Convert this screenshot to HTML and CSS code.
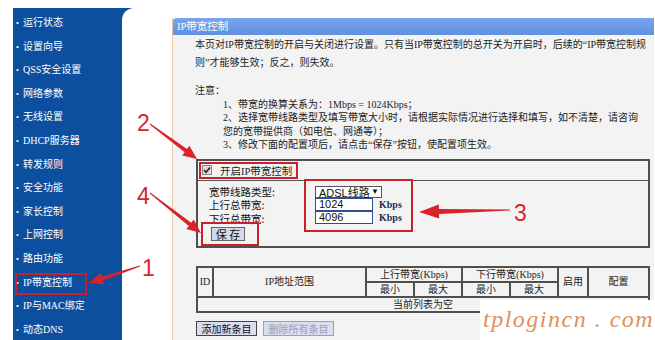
FILE: index.html
```html
<!DOCTYPE html>
<html lang="zh-CN">
<head>
    <meta charset="UTF-8">
    <meta name="viewport" content="width=device-width, initial-scale=1.0">
    <title>IP带宽控制</title>
    <link rel="stylesheet" href="styles.css">
</head>
<body>

<div class="page">
    <ul class="menu">
        <li>运行状态</li>
        <li>设置向导</li>
        <li>QSS安全设置</li>
        <li>网络参数</li>
        <li>无线设置</li>
        <li>DHCP服务器</li>
        <li>转发规则</li>
        <li>安全功能</li>
        <li>家长控制</li>
        <li>上网控制</li>
        <li>路由功能</li>
        <li class="marked">IP带宽控制</li>
        <li>IP与MAC绑定</li>
        <li>动态DNS</li>
    </ul>

    <div class="main">
        <div class="panel">
            <div class="panel-head">IP带宽控制</div>
            <div class="panel-body">
                <p class="intro">本页对IP带宽控制的开启与关闭进行设置。只有当IP带宽控制的总开关为开启时，后续的“IP带宽控制规<br>则”才能够生效；反之，则失效。</p>

                <div class="notes">
                    <p>注意：</p>
                    <p class="note">1、带宽的换算关系为：1Mbps = 1024Kbps；</p>
                    <p class="note">2、选择宽带线路类型及填写带宽大小时，请根据实际情况进行选择和填写，如不清楚，请咨询<br>您的宽带提供商（如电信、网通等）；</p>
                    <p class="note">3、修改下面的配置项后，请点击“保存”按钮，使配置项生效。</p>
                </div>

                <div class="settings">
                    <div class="switch-row">
                        <label class="switch">
                            <span class="check">
                                <svg width="8" height="8" viewBox="0 0 8 8"><path d="M1 4 L3 6.2 L7 1.5" fill="none" stroke="#222" stroke-width="1.6"/></svg>
                            </span>
                            开启IP带宽控制
                        </label>
                    </div>
                    <div class="form-row">
                        <div class="form-left">
                            <div class="labels">
                                <div>宽带线路类型:</div>
                                <div>上行总带宽:</div>
                                <div>下行总带宽:</div>
                            </div>
                            <div class="save-wrap"><button class="save">保 存</button></div>
                        </div>
                        <div class="form-right">
                            <div class="line first"><span class="select">ADSL线路<i>▼</i></span></div>
                            <div class="line"><input class="num" type="text" value="1024"><span class="unit">Kbps</span></div>
                            <div class="line"><input class="num" type="text" value="4096"><span class="unit">Kbps</span></div>
                        </div>
                    </div>
                </div>

                <table class="rules">
                    <colgroup>
                        <col style="width:16px"><col style="width:153px">
                        <col style="width:48px"><col style="width:48px">
                        <col style="width:48px"><col style="width:48px">
                        <col style="width:30px"><col style="width:61px">
                    </colgroup>
                    <tr>
                        <th rowspan="2">ID</th>
                        <th rowspan="2">IP地址范围</th>
                        <th colspan="2">上行带宽(Kbps)</th>
                        <th colspan="2">下行带宽(Kbps)</th>
                        <th rowspan="2">启用</th>
                        <th rowspan="2">配置</th>
                    </tr>
                    <tr>
                        <th>最小</th><th>最大</th><th>最小</th><th>最大</th>
                    </tr>
                    <tr>
                        <td colspan="8">当前列表为空</td>
                    </tr>
                </table>

                <div class="actions">
                    <button class="btn add">添加新条目</button>
                    <button class="btn del" disabled>删除所有条目</button>
                </div>
            </div>
        </div>
    </div>

    <div class="watermark">tplogincn . com</div>

    <svg class="marks" width="655" height="340" viewBox="0 0 655 340">
        <!-- arrows -->
        <polygon points="139.8,265.5 101.7,276.7 100.4,272.9 89,283 104.2,284.3 102.9,280.5 140.2,266.5"/>
        <polygon points="149.7,124.4 184.6,152.2 182.2,155.5 197,159 189.4,145.8 187.0,149.0 150.3,123.6"/>
        <polygon points="149.7,193.4 188.8,225.9 186.3,229.1 201,233 193.7,219.6 191.2,222.8 150.3,192.6"/>
        <polygon points="510,209.5 439,209.1 438.8,204.6 419,212 439.2,218.6 439,214.1 510,210.5"/>
        <!-- step numbers -->
        <text x="137" y="131">2</text>
        <text x="137" y="204">4</text>
        <text x="142" y="276">1</text>
        <text x="514" y="221">3</text>
    </svg>
</div>

</body>
</html>
```

FILE: styles.css
```css
body {
    margin: 0;
    background-color: #fff;
    font-family: "Liberation Serif", "Noto Sans CJK SC", serif;
    font-size: 10px;
    color: #222;
}
.page {
    position: relative;
    display: flex;
    height: 340px;
    padding: 8px 0 0 13px;
    box-sizing: border-box;
    overflow: hidden;
}

/* left menu */
.menu {
    flex: none;
    width: 120px;
    margin: 0;
    padding: 3px 0 0 3px;
    box-sizing: border-box;
    list-style: none;
    background-color: #0c4f9e;
}
.menu li {
    height: 23.6px;
    line-height: 23.6px;
    color: #fff;
    white-space: nowrap;
}
.menu li::before {
    content: "•";
    display: inline-block;
    width: 7px;
    font-size: 8px;
}
.menu li.marked {
    position: relative;
}
.menu li.marked::after {
    content: "";
    position: absolute;
    left: -1px;
    top: 2px;
    width: 72px;
    height: 22px;
    border: 2px solid #c8202c;
    box-sizing: border-box;
}

/* main area */
.main {
    flex: 1;
    margin-left: -11px;
    padding: 10px 3px 0 50px;
    background-color: #fff;
    border-top-left-radius: 12px;
}
.panel {
    height: 100%;
    background-color: #f3f3f3;
    border-left: 1px solid #e4c7a2;
}
.panel-head {
    height: 17px;
    line-height: 17px;
    padding-left: 4px;
    color: #fff;
    font-size: 10.5px;
    background: linear-gradient(#7aa5ec, #6090e0);
    border-top-left-radius: 4px;
}
.panel-body {
    padding: 0 4px 0 22px;
}
.intro {
    margin: 0;
    padding-top: 1px;
    line-height: 17.5px;
    white-space: nowrap;
}
.notes {
    margin-top: 13px;
    line-height: 13.5px;
}
.notes p {
    margin: 0;
    white-space: nowrap;
}
.note {
    padding-left: 28px;
}

/* settings box */
.settings {
    margin: 7px 0 0 1px;
    border: 2px solid #4f4f4f;
    font-family: "Noto Sans CJK SC", sans-serif;
}
.switch-row {
    height: 20px;
    padding-top: 1px;
    box-sizing: border-box;
    border-bottom: 1px solid #555;
}
.switch {
    display: inline-flex;
    align-items: center;
    gap: 8px;
    height: 17px;
    margin-left: 1px;
    padding: 0 4px 0 1px;
    box-sizing: border-box;
    border: 2px solid #c8202c;
    font-family: "Liberation Serif", "Noto Sans CJK SC", serif;
    font-size: 10.5px;
}
.check {
    display: flex;
    align-items: center;
    justify-content: center;
    width: 8px;
    height: 8px;
    border: 1px solid #8a8a8a;
    background-color: #dcdcdc;
}
.form-row {
    display: flex;
}
.form-left {
    width: 106px;
}
.labels {
    padding: 4px 0 0 11px;
    line-height: 13.5px;
    font-size: 10.5px;
    color: #111;
}
.save-wrap {
    display: inline-block;
    margin: -3px 0 0 3px;
    padding: 3px 12px 3px 8px;
    border: 2px solid #c8202c;
}
.save {
    display: block;
    width: 34px;
    height: 14px;
    padding: 0;
    border: 1px solid #666;
    background-color: #d4d8ea;
    font-family: "Noto Sans CJK SC", sans-serif;
    font-size: 11px;
    line-height: 12px;
    color: #111;
}
.form-right {
    width: 109px;
    height: 53px;
    margin-top: -2px;
    padding: 5px 9px;
    box-sizing: border-box;
    border: 2px solid #c8202c;
}
.line {
    display: flex;
    align-items: center;
    height: 13px;
}
.line.first {
    height: 12px;
}
.select {
    display: flex;
    justify-content: space-between;
    align-items: center;
    width: 67px;
    height: 12px;
    padding: 0 2px 0 3px;
    box-sizing: border-box;
    border: 1px solid #555;
    background-color: #fff;
    font-family: "Liberation Sans", "Noto Sans CJK SC", sans-serif;
    font-size: 11px;
    color: #111;
}
.select i {
    font-style: normal;
    font-size: 8px;
}
.num {
    width: 58px;
    height: 13px;
    margin: 0;
    padding: 0 3px;
    box-sizing: border-box;
    border: 1px solid #2d4f8e;
    background-color: #fff;
    font-family: "Liberation Sans", sans-serif;
    font-size: 11px;
    color: #111;
}
.unit {
    margin-left: 6px;
    font-family: "Liberation Serif", serif;
    font-size: 10px;
    font-weight: bold;
    color: #1f2d55;
}

/* rules table */
.rules {
    width: 452px;
    margin: 18px 0 0 1px;
    border-collapse: collapse;
    table-layout: fixed;
}
.rules th, .rules td {
    height: 13px;
    padding: 0;
    border: 2px solid #4f4f4f;
    font-weight: normal;
    font-size: 10px;
    line-height: 12px;
    text-align: center;
    white-space: nowrap;
    overflow: hidden;
}

.actions {
    display: flex;
    gap: 6px;
    margin: 8px 0 0 1px;
}
.btn {
    height: 15px;
    padding: 0;
    border: 1px solid #444;
    background-color: #dadcf0;
    font-family: "Noto Sans CJK SC", sans-serif;
    font-size: 10px;
    line-height: 13px;
    color: #111;
}
.btn.add {
    width: 61px;
}
.btn.del {
    width: 71px;
    border-color: #9aa0b8;
    color: #9a9fb2;
}

/* overlays */
.watermark {
    position: absolute;
    left: 480px;
    top: 300px;
    width: 175px;
    height: 40px;
    padding: 7px 0 0 3px;
    box-sizing: border-box;
    background-color: #fff;
    font-family: "Liberation Serif", serif;
    font-style: italic;
    font-size: 24px;
    line-height: 24px;
    letter-spacing: 1.5px;
    color: #e0905e;
    white-space: nowrap;
}
.marks {
    position: absolute;
    left: 0;
    top: 0;
    pointer-events: none;
    fill: #d9232a;
}
.marks text {
    font-family: "Liberation Sans", sans-serif;
    font-size: 23px;
}
```
